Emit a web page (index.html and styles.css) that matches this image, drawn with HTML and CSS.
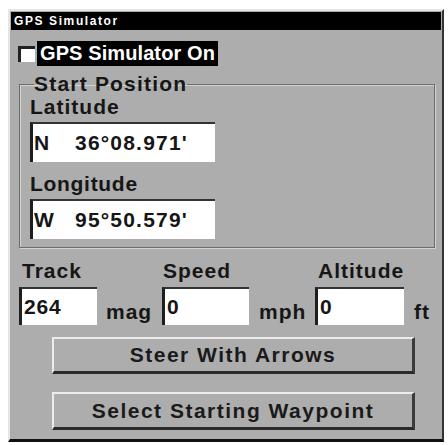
FILE: index.html
```html
<!DOCTYPE html>
<html>
<head>
<meta charset="utf-8">
<link rel="stylesheet" href="styles.css">
</head>
<body>
<div class="panel">
  <div class="titlebar">GPS Simulator</div>
  <div class="check-row">
    <span class="checkbox"></span>
    <span class="check-label">GPS Simulator On</span>
  </div>
  <fieldset class="group">
    <legend class="legend">Start Position</legend>
    <div class="label lat-label">Latitude</div>
    <div class="coord"><span class="hemi">N</span><span class="val">36°08.971'</span></div>
    <div class="label lon-label">Longitude</div>
    <div class="coord"><span class="hemi">W</span><span class="val">95°50.579'</span></div>
  </fieldset>
  <div class="motion">
    <div class="field">
      <div class="label flabel">Track</div>
      <div class="num">264</div>
    </div>
    <div class="unit unit-mag">mag</div>
    <div class="field">
      <div class="label flabel speed-label">Speed</div>
      <div class="num">0</div>
    </div>
    <div class="unit unit-mph">mph</div>
    <div class="field">
      <div class="label flabel">Altitude</div>
      <div class="num">0</div>
    </div>
    <div class="unit unit-ft">ft</div>
  </div>
  <div class="btn btn-first">Steer With Arrows</div>
  <div class="btn btn-second">Select Starting Waypoint</div>
</div>
</body>
</html>
```

FILE: styles.css
```css
html, body {
  margin: 0;
  padding: 0;
  background: #ffffff;
}
body {
  font-family: "Liberation Sans", Arial, sans-serif;
  color: #161616;
}
.panel {
  box-sizing: border-box;
  margin: 9px 0 0 8px;
  width: 436px;
  height: 433px;
  background: #adadad;
  border-top: 2px solid #e6e6e6;
  border-left: 2px solid #e6e6e6;
  border-right: 2px solid #333333;
  border-bottom: 3px solid #111111;
  padding: 1px;
  display: flex;
  flex-direction: column;
}
.titlebar {
  height: 18px;
  line-height: 18px;
  background: #000000;
  color: #ffffff;
  font-size: 12px;
  font-weight: bold;
  letter-spacing: 1.6px;
  padding-left: 3px;
}
.check-row {
  display: flex;
  align-items: center;
  margin-top: 11px;
  padding-left: 7px;
  height: 25px;
}
.checkbox {
  box-sizing: border-box;
  width: 17px;
  height: 16px;
  background: #ffffff;
  border-top: 3px solid #222222;
  border-left: 3px solid #222222;
  margin-right: 2px;
}
.check-label {
  height: 25px;
  line-height: 25px;
  background: #000000;
  color: #ffffff;
  font-size: 20px;
  font-weight: bold;
  padding: 0 3px;
  letter-spacing: 0.1px;
}
.group {
  margin: 7px 6px 0 8px;
  padding: 1px 0 8px 10px;
  border: 1px solid #6c6c6c;
  box-shadow: 1px 1px 0 #d2d2d2, inset 1px 1px 0 #d2d2d2;
  min-width: 0;
}
.legend {
  padding: 0;
  margin-left: 4px;
  font-size: 21px;
  line-height: 22px;
  font-weight: bold;
  letter-spacing: 1.2px;
}
.label {
  font-size: 21px;
  line-height: 22px;
  font-weight: bold;
  letter-spacing: 1px;
}
.lat-label {
  margin-bottom: 4px;
}
.lon-label {
  margin-top: 11px;
  margin-bottom: 4px;
  letter-spacing: 0.7px;
}
.coord {
  box-sizing: border-box;
  width: 185px;
  height: 40px;
  background: #ffffff;
  border-top: 2px solid #333333;
  border-left: 3px solid #1e1e1e;
  padding-left: 1px;
  display: flex;
  line-height: 38px;
  font-size: 21px;
  font-weight: bold;
  letter-spacing: 1.2px;
}
.hemi {
  width: 41px;
}
.motion {
  display: grid;
  grid-template-columns: 78px 65px 87px 66px 89px auto;
  margin-top: 12px;
  padding-left: 8px;
}
.field {
  display: flex;
  flex-direction: column;
}
.flabel {
  padding-left: 3px;
  margin-bottom: 5px;
}
.speed-label {
  padding-left: 1px;
}
.num {
  box-sizing: border-box;
  height: 38px;
  background: #ffffff;
  border-top: 2px solid #333333;
  border-left: 3px solid #1e1e1e;
  padding-left: 2px;
  line-height: 36px;
  font-size: 21px;
  font-weight: bold;
  letter-spacing: 0.8px;
}
.unit {
  align-self: end;
  padding-bottom: 2px;
  font-size: 21px;
  line-height: 22px;
  font-weight: bold;
  letter-spacing: 1px;
}
.unit-mag {
  padding-left: 9px;
}
.unit-mph {
  padding-left: 10px;
}
.unit-ft {
  padding-left: 10px;
}
.btn {
  box-sizing: border-box;
  margin-left: 41px;
  width: 363px;
  background: #adadad;
  border-top: 2px solid #ececec;
  border-left: 2px solid #ececec;
  border-right: 3px solid #3a3a3a;
  border-bottom: 3px solid #2a2a2a;
  text-align: center;
  font-size: 21px;
  font-weight: bold;
  letter-spacing: 1.5px;
  color: #1a1a1a;
}
.btn-first {
  margin-top: 12px;
  height: 37px;
  line-height: 32px;
}
.btn-second {
  margin-top: 18px;
  height: 38px;
  line-height: 33px;
}
```
